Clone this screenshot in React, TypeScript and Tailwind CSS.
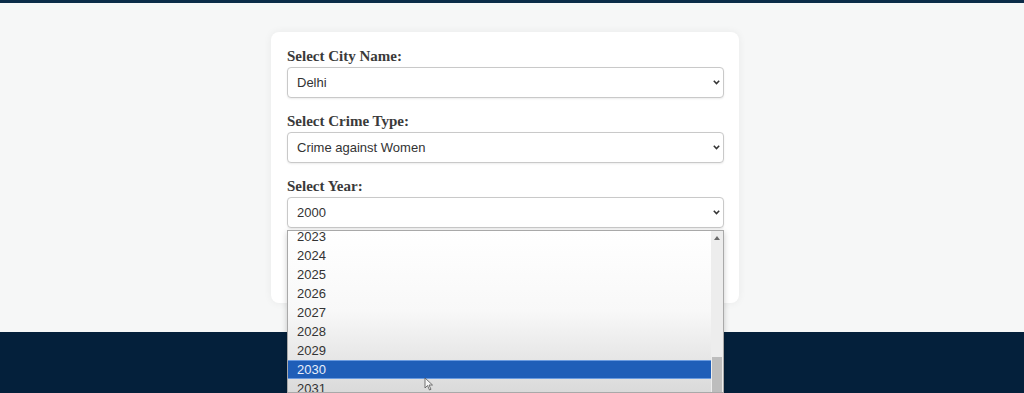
import React from "react";

const years = ["2023", "2024", "2025", "2026", "2027", "2028", "2029", "2030", "2031"];

function Field({ label, value, options }: { label: string; value: string; options: string[] }) {
  return (
    <div className="flex flex-col">
      <label className="mb-[1px] h-[20px] font-['Liberation_Serif',serif] text-[15px] font-bold leading-[20px] text-[#3a3a3a]">
        {label}
      </label>
      <div className="relative">
        <select
          defaultValue={value}
          className="h-[31px] w-full appearance-none rounded-[4px] border border-[#c9c9c9] bg-white pl-[9px] font-['Liberation_Sans',Arial,sans-serif] text-[13px] text-[#333] shadow-[0_1px_2px_rgba(0,0,0,0.08)] outline-none"
        >
          {options.map((o) => (
            <option key={o}>{o}</option>
          ))}
        </select>
        <svg
          className="pointer-events-none absolute right-[4px] top-[13px]"
          width="7"
          height="5"
          viewBox="0 0 7 5"
        >
          <path d="M0.8 0.8 L3.5 3.6 L6.2 0.8" fill="none" stroke="#333" strokeWidth="1.5" />
        </svg>
      </div>
    </div>
  );
}

export default function App() {
  return (
    <div className="h-[393px] overflow-hidden bg-[#04203b]">
      <div className="h-[3px] bg-[#0b2c48]" />
      <main className="flex h-[329px] justify-center bg-[#f6f7f7] pr-[14px] pt-[29px]">
        <div className="relative h-[271px] w-[468px] rounded-lg bg-white pl-4 pr-[15px] pt-[14px] shadow-[0_0_8px_rgba(0,0,0,0.06)]">
          <div className="flex flex-col gap-[13px]">
            <Field label="Select City Name:" value="Delhi" options={["Delhi", "Mumbai", "Kolkata", "Chennai"]} />
            <Field
              label="Select Crime Type:"
              value="Crime against Women"
              options={["Crime against Women", "Crime against Children", "Cyber Crime"]}
            />
            <Field label="Select Year:" value="2000" options={["2000", "2001", "2002"]} />
          </div>

          {/* open year dropdown */}
          <div className="absolute left-4 top-[198px] z-10 flex h-[163px] w-[437px] overflow-hidden border border-[#a9a9a9] bg-gradient-to-b from-white via-[#f8f8f8] to-[#dadada] font-['Liberation_Sans',Arial,sans-serif] text-[13px] text-[#333] shadow-[0_2px_6px_rgba(0,0,0,0.2)]">
            <div className="-mt-[4px] flex flex-1 flex-col">
              {years.map((y) => (
                <div
                  key={y}
                  className={
                    y === "2030"
                      ? "h-[19px] border-y border-[#6b9be0] bg-[#1f5eb8] pl-[9px] leading-[17px] text-[#e8eefa]"
                      : "h-[19px] pl-[9px] leading-[19px]"
                  }
                >
                  {y}
                </div>
              ))}
            </div>
            <div className="relative w-[12px] bg-[#ededed]">
              <svg className="absolute left-[3px] top-[5px]" width="6" height="4" viewBox="0 0 6 4">
                <path d="M0 4 L3 0 L6 4 Z" fill="#6a6a6a" />
              </svg>
              <div className="absolute bottom-0 left-[1px] right-[1px] top-[126px] bg-[#bdbdbd]" />
            </div>
          </div>

          {/* cursor */}
          <svg className="absolute left-[153px] top-[345px] z-20" width="10" height="14" viewBox="0 0 10 14">
            <path d="M1 1 L1 11 L3.5 8.5 L5.5 13 L7 12.3 L5 8 L8.5 8 Z" fill="#f4f4f4" stroke="#555" strokeWidth="0.8" />
          </svg>
        </div>
      </main>
    </div>
  );
}
